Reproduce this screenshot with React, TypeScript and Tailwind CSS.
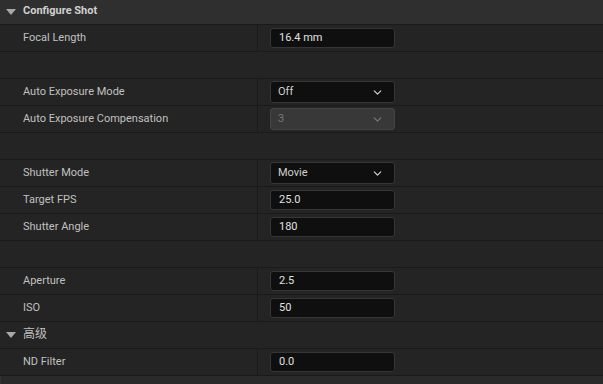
import { ChevronDown } from "lucide-react";

type Row =
  | { kind: "header"; label: string }
  | { kind: "empty" }
  | { kind: "input"; label: string; value: string }
  | { kind: "select"; label: string; value: string; disabled?: boolean };

const rows: Row[] = [
  { kind: "input", label: "Focal Length", value: "16.4 mm" },
  { kind: "empty" },
  { kind: "select", label: "Auto Exposure Mode", value: "Off" },
  { kind: "select", label: "Auto Exposure Compensation", value: "3", disabled: true },
  { kind: "empty" },
  { kind: "select", label: "Shutter Mode", value: "Movie" },
  { kind: "input", label: "Target FPS", value: "25.0" },
  { kind: "input", label: "Shutter Angle", value: "180" },
  { kind: "empty" },
  { kind: "input", label: "Aperture", value: "2.5" },
  { kind: "input", label: "ISO", value: "50" },
  { kind: "header", label: "高级" },
  { kind: "input", label: "ND Filter", value: "0.0" },
];

function Triangle() {
  return (
    <svg width="10" height="6" viewBox="0 0 10 6" className="shrink-0">
      <path d="M0 0 H10 L5 6 Z" fill="#a8a8a8" />
    </svg>
  );
}

function PropRow({ row }: { row: Row }) {
  if (row.kind === "header") {
    return (
      <div className="flex items-center h-[27px] border-b border-[#1a1a1a] bg-[#242424] pl-[6px] gap-[7px]">
        <Triangle />
        <span className="text-[12px] text-[#c0c0c0] pb-[2px]">{row.label}</span>
      </div>
    );
  }
  if (row.kind === "empty") {
    return <div className="h-[27px] border-b border-[#1a1a1a] bg-[#242424]" />;
  }
  return (
    <div className="flex h-[27px] border-b border-[#1a1a1a] bg-[#242424]">
      <div className="w-[257px] shrink-0 flex items-center pl-[23px] pb-[2px] text-[#c0c0c0]">{row.label}</div>
      <div className="w-px bg-[#1a1a1a]" />
      <div className="flex items-center pl-[12px]">
        {row.kind === "input" ? (
          <div className="w-[125px] h-[20px] rounded-[3px] border border-[#363636] bg-[#0f0f0f] flex items-center pl-[8px] pb-px text-[#e0e0e0]">
            {row.value}
          </div>
        ) : (
          <div
            className={
              row.disabled
                ? "w-[125px] h-[22px] rounded-[3px] border border-[#454545] bg-[#383838] flex items-center justify-between pl-[7px] pr-[10px] text-[#777777]"
                : "w-[125px] h-[22px] rounded-[3px] border border-[#363636] bg-[#0f0f0f] flex items-center justify-between pl-[7px] pr-[10px] text-[#d0d0d0]"
            }
          >
            <span className="pb-px">{row.value}</span>
            <ChevronDown size={13} strokeWidth={2.2} color={row.disabled ? "#777777" : "#d0d0d0"} />
          </div>
        )}
      </div>
    </div>
  );
}

export default function App() {
  return (
    <div
      className="w-[603px] h-[384px] overflow-hidden bg-[#242424] text-[11px] leading-none"
      style={{ fontFamily: "Roboto, 'Noto Sans CJK SC', sans-serif" }}
    >
      <div className="flex items-center h-[25px] border-b border-[#1a1a1a] bg-[#2f2f2f] pl-[6px] gap-[7px]">
        <Triangle />
        <span className="font-bold text-[#d0d0d0] pb-[3px]">Configure Shot</span>
      </div>
      {rows.map((r, i) => (
        <PropRow key={i} row={r} />
      ))}
      <div className="h-[20px] bg-[#2a2a2a] border-l border-[#333]" />
    </div>
  );
}
